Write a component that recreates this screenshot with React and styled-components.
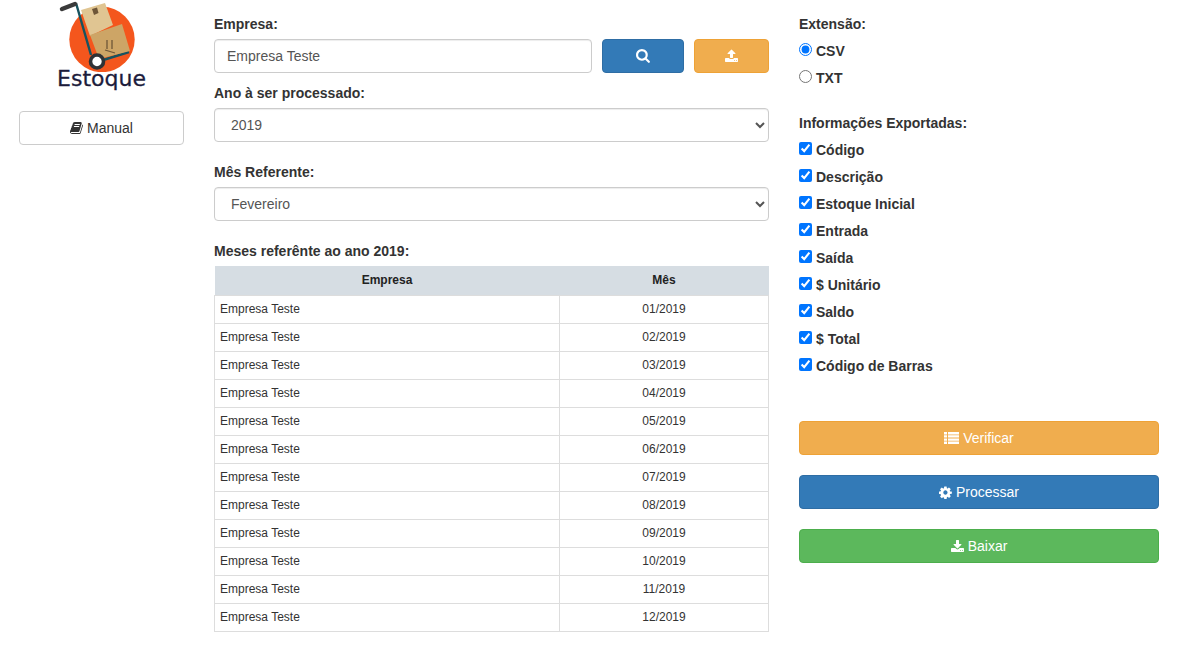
import React from "react";
import styled, { createGlobalStyle } from "styled-components";

const Global = createGlobalStyle`
  * { box-sizing: border-box; }
  html, body { margin: 0; padding: 0; background: #fff; }
  body { font-family: "Liberation Sans", Arial, sans-serif; font-size: 14px; line-height: 20px; color: #333; }
`;

const Page = styled.div`
  display: grid;
  grid-template-columns: 165px 555px 360px;
  column-gap: 30px;
  padding: 0 27px 0 19px;
  width: 1186px;
  height: 667px;
  overflow: hidden;
`;
const Column = styled.div`
  display: flex;
  flex-direction: column;
  padding-top: ${p => p.$top || 0}px;
`;
const LogoBox = styled.div`
  align-self: center;
  width: 100px;
  height: 111px;
  display: flex;
  flex-direction: column;
  align-items: center;
`;
const LogoWord = styled.div`
  font-family: "DejaVu Sans", sans-serif;
  font-size: 22px;
  line-height: 24px;
  color: #1c1c3c;
  margin-top: -5px;
  -webkit-text-stroke: 0.3px #1c1c3c;
`;
const Button = styled.button`
  display: flex;
  align-items: center;
  justify-content: center;
  gap: 4px;
  height: 34px;
  width: ${p => p.$w ? p.$w + "px" : "100%"};
  flex: none;
  padding: 0;
  font: 14px/20px "Liberation Sans", Arial, sans-serif;
  border-radius: 4px;
  border: 1px solid ${p => p.$border};
  background: ${p => p.$bg};
  color: ${p => p.$color || "#fff"};
  svg { display: block; flex: none; }
`;
const Label = styled.div`
  font-weight: 700;
  font-size: 14px;
  line-height: 20px;
  margin-bottom: ${p => p.$mb ?? 5}px;
  color: #333;
`;
const Row = styled.div`
  display: flex;
  gap: 10px;
  margin-bottom: 10px;
`;
const Input = styled.input`
  flex: 1;
  min-width: 0;
  height: 34px;
  padding: 6px 12px;
  font: 14px/20px "Liberation Sans", Arial, sans-serif;
  color: #555;
  border: 1px solid #ccc;
  border-radius: 4px;
  box-shadow: inset 0 1px 1px rgba(0,0,0,.075);
  outline: none;
`;
const Select = styled.select`
  display: block;
  width: 100%;
  height: 34px;
  padding: 6px 12px;
  margin-bottom: ${p => p.$mb}px;
  font: 14px/20px "Liberation Sans", Arial, sans-serif;
  color: #555;
  background: #fff;
  border: 1px solid #ccc;
  border-radius: 4px;
  box-shadow: inset 0 1px 1px rgba(0,0,0,.075);
`;
const Table = styled.table`
  width: 555px;
  border-collapse: collapse;
  table-layout: fixed;
  font-size: 12px;
  line-height: 17px;
  color: #333;
`;
const Th = styled.th`
  height: 29px;
  padding: 0 5px;
  background: #d6dde3;
  font-weight: 700;
  text-align: center;
  color: #222;
  width: ${p => p.$w || "auto"};
`;
const Td = styled.td`
  height: 28px;
  padding: 0 5px;
  border: 1px solid #ddd;
  text-align: ${p => p.$center ? "center" : "left"};
`;
const Option = styled.label`
  display: flex;
  align-items: center;
  height: 27px;
  font-weight: 700;
  color: #333;
  input { margin: 0 4px 2px 0; width: 13px; height: 13px; flex: none; }
`;
const Spacer = styled.div`
  height: ${p => p.$h}px;
  flex: none;
`;
const Actions = styled.div`
  display: flex;
  flex-direction: column;
  gap: 20px;
`;

const Glyph = ({ w, size = 14, y = 0, d }) => (
  <svg width={(size * w) / 1792} height={size} viewBox={`0 ${y} ${w} 1792`} fill="currentColor">
    <path d={d} />
  </svg>
);

const BookIcon = () => (
  <Glyph w={1664} d="M1639 478q40 57 18 129l-275 906q-19 64-76.500 107.500T1183 1664H260q-77 0-148.500-53.500T12 1479q-24-67-2-127 0-4 3-27t4-37q1-8-3-21.500t-3-19.500q2-11 8-21t16.500-23.500T51 1179q23-38 45-91.500t30-91.500q3-10 .5-30t-.5-28q3-11 17-28t17-23q21-36 42-92t25-90q1-9-2.500-32t.5-28q4-13 22-30.500t22-22.500q19-26 42.500-84.500T339 425q1-8-3-25.500t-2-26.500q2-8 9-18t18-23 17-21q8-12 16.500-30.500t15-35 16-36 19.500-32 26.500-23.500 36-11.500T555 149l-1 3q38-9 51-9h761q74 0 114 56t18 130l-274 906q-36 119-71.500 153.500T1024 1423H155q-27 0-38 15-11 16-1 43 24 70 144 70h923q29 0 56-15.500t35-41.500l300-987q7-22 5-57 38 15 60 43zm-1064 2q-4 13 2 22.500t20 9.500h608q13 0 25.500-9.500T1247 480l21-64q4-13-2-22.500t-20-9.500H638q-13 0-25.500 9.500T596 416zm-83 256q-4 13 2 22.500t20 9.500h608q13 0 25.500-9.500T1164 736l21-64q4-13-2-22.500t-20-9.500H555q-13 0-25.500 9.500T513 672z" />
);
const SearchIcon = () => (
  <Glyph w={1664} size={15} d="M1152 704q0-185-131.500-316.500T704 256 387.500 387.500 256 704t131.500 316.500T704 1152t316.500-131.500T1152 704zm512 832q0 52-38 90t-90 38q-54 0-90-38l-343-342q-179 124-399 124-143 0-273.500-55.500t-225-150-150-225T0 704t55.500-273.500 150-225 225-150T704 0t273.500 55.500 225 150 150 225T1408 704q0 220-124 399l343 343q37 37 37 90z" />
);
const CogIcon = () => (
  <Glyph w={1536} size={15} d="M1024 896q0-106-75-181t-181-75-181 75-75 181 75 181 181 75 181-75 75-181zm512-109v222q0 12-8 23t-20 13l-185 28q-19 54-39 91 35 50 107 138 10 12 10 25t-9 23q-27 37-99 108t-94 71q-12 0-26-9l-138-108q-44 23-91 38-16 136-29 186-7 28-36 28H657q-14 0-24.500-8.500T621 1674l-28-184q-49-16-90-37l-141 107q-10 9-25 9-14 0-25-11-126-114-165-168-7-10-7-23 0-12 8-23 15-21 51-66.500t54-70.500q-27-50-41-99L29 1081q-13-2-21-12.500T0 1045V823q0-12 8-23t19-13l186-28q14-46 39-92-40-57-107-138-10-12-10-24 0-10 9-23 26-36 98.500-107.500T337 303q13 0 26 10l138 107q44-23 91-38 16-136 29-186 7-28 36-28h222q14 0 24.500 8.500T915 198l28 184q49 16 90 37l142-107q9-9 24-9 13 0 25 10 129 119 165 170 7 8 7 22 0 12-8 23-15 21-51 66.500t-54 70.500q26 50 41 98l183 28q13 2 21 12.500t8 23.500z" />
);
const UploadIcon = () => (
  <Glyph w={1664} y={-128} d="M1280 1344q0-26-19-45t-45-19-45 19-19 45 19 45 45 19 45-19 19-45zm256 0q0-26-19-45t-45-19-45 19-19 45 19 45 45 19 45-19 19-45zm128-224v320q0 40-28 68t-68 28H96q-40 0-68-28t-28-68v-320q0-40 28-68t68-28h427q21 56 70.500 92t110.500 36h256q61 0 110.500-36t70.500-92h427q40 0 68 28t28 68zm-325-648q-17 40-59 40h-256v448q0 26-19 45t-45 19H704q-26 0-45-19t-19-45V512H384q-42 0-59-40-17-39 14-69L787-45q18-19 45-19t45 19l448 448q31 30 14 69z" />
);
const DownloadIcon = () => (
  <Glyph w={1664} y={-128} d="M1280 1344q0-26-19-45t-45-19-45 19-19 45 19 45 45 19 45-19 19-45zm256 0q0-26-19-45t-45-19-45 19-19 45 19 45 45 19 45-19 19-45zm128-224v320q0 40-28 68t-68 28H96q-40 0-68-28t-28-68v-320q0-40 28-68t68-28h465l135 136q58 56 136 56t136-56l136-136h464q40 0 68 28t28 68zM1339 551q17 41-14 70L877 1069q-18 19-45 19t-45-19L339 621q-31-29-14-70 17-39 59-39h256V64q0-26 19-45t45-19h256q26 0 45 19t19 45v448h256q42 0 59 39z" />
);
const ListIcon = () => (
  <svg width="15" height="12" viewBox="0 0 15 12" fill="currentColor">
    <path d="M0 0h3v2.400H0zM4 0h11v2.400H4zM0 3.200h3v2.400H0zM4 3.200h11v2.400H4zM0 6.400h3v2.400H0zM4 6.400h11v2.400H4zM0 9.600h3V12H0zM4 9.600h11V12H4z" />
  </svg>
);

const Logo = () => (
  <svg width="90" height="72" viewBox="57 0 90 72" style={{ flex: "none" }}>
    <circle cx="102" cy="39.500" r="32.700" fill="#f4561d" />
    <path d="M76 3l15 52M100 61l29-9" stroke="#17535f" strokeWidth="2.400" fill="none" />
    <polygon points="81,10 105,3 113,25 90,36" fill="#e0c592" />
    <polygon points="92,9 97,7.500 98.500,13 94,15" fill="#6e5638" />
    <polygon points="90,35 122,24 130,51 99,59" fill="#cda566" />
    <path d="M107 40v9M112 40v9M105 50l10 3" stroke="#6e5638" strokeWidth="1.300" fill="none" />
    <path d="M62 9l13-5" stroke="#3a3a3a" strokeWidth="4.500" strokeLinecap="round" />
    <circle cx="97" cy="61.500" r="6.500" fill="#fff" stroke="#2f3236" strokeWidth="3.600" />
  </svg>
);

const months = ["01","02","03","04","05","06","07","08","09","10","11","12"];
const fields = ["Código","Descrição","Estoque Inicial","Entrada","Saída","$ Unitário","Saldo","$ Total","Código de Barras"];

export default function App() {
  return (
    <Page>
      <Global />
      <Column>
        <LogoBox>
          <Logo />
          <LogoWord>Estoque</LogoWord>
        </LogoBox>
        <Button $bg="#fff" $border="#ccc" $color="#333">
          <BookIcon /> Manual
        </Button>
      </Column>
      <Column $top={14}>
        <Label>Empresa:</Label>
        <Row>
          <Input readOnly value="Empresa Teste" />
          <Button $w={82} $bg="#337ab7" $border="#2e6da4"><SearchIcon /></Button>
          <Button $w={75} $bg="#f0ad4e" $border="#eea236"><UploadIcon /></Button>
        </Row>
        <Label>Ano à ser processado:</Label>
        <Select $mb={20} defaultValue="2019"><option>2019</option></Select>
        <Label>Mês Referente:</Label>
        <Select $mb={20} defaultValue="Fevereiro"><option>Fevereiro</option></Select>
        <Label>Meses referênte ao ano 2019:</Label>
        <Table>
          <thead>
            <tr><Th $w="345px">Empresa</Th><Th>Mês</Th></tr>
          </thead>
          <tbody>
            {months.map(m => (
              <tr key={m}>
                <Td>Empresa Teste</Td>
                <Td $center>{m}/2019</Td>
              </tr>
            ))}
          </tbody>
        </Table>
      </Column>
      <Column $top={14}>
        <Label $mb={3}>Extensão:</Label>
        <Option><input type="radio" name="ext" defaultChecked /> CSV</Option>
        <Option><input type="radio" name="ext" /> TXT</Option>
        <Spacer $h={22} />
        <Label $mb={0}>Informações Exportadas:</Label>
        <Spacer $h={3} />
        {fields.map(f => (
          <Option key={f}><input type="checkbox" defaultChecked /> {f}</Option>
        ))}
        <Spacer $h={42} />
        <Actions>
          <Button $bg="#f0ad4e" $border="#eea236"><ListIcon /> Verificar</Button>
          <Button $bg="#337ab7" $border="#2e6da4"><CogIcon /> Processar</Button>
          <Button $bg="#5cb85c" $border="#4cae4c"><DownloadIcon /> Baixar</Button>
        </Actions>
      </Column>
    </Page>
  );
}
